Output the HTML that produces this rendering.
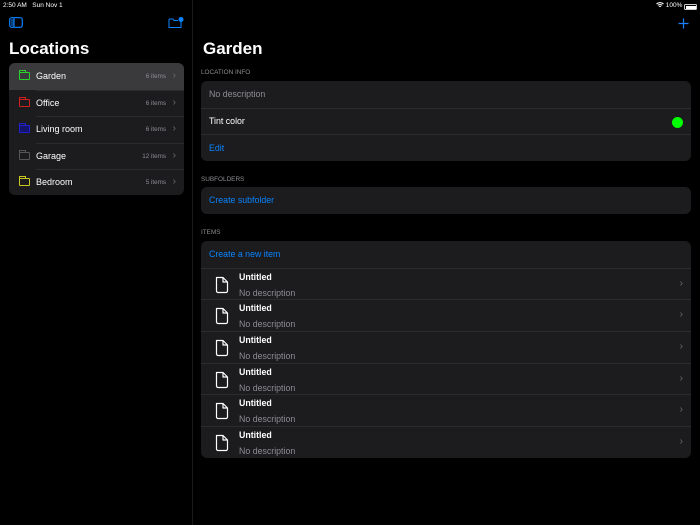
<!DOCTYPE html>
<html><head><meta charset="utf-8"><style>
*{margin:0;padding:0;box-sizing:border-box}
body{width:700px;height:525px;background:#000;font-family:"Liberation Sans",sans-serif;color:#fff;position:relative;overflow:hidden}
.abs{position:absolute}
.status{font-size:6.5px;color:#fff;top:2px}
.sidebar{left:0;top:0;width:193px;height:525px;border-right:1px solid #1a1a1a}
.list{left:9px;top:63px;width:175px;height:132px;background:#1c1c1e;border-radius:6px;overflow:hidden}
.row{height:26.5px;position:relative;font-size:9px}
.row .f{position:absolute;left:10px;top:9px;width:11px;height:8px;border:1px solid;border-radius:1px}
.row .f:before{content:"";position:absolute;left:-1px;top:-3px;width:5px;height:2px;border:1px solid;border-bottom:none;border-color:inherit}
.row .n{position:absolute;left:27px;top:8px}
.row .c{position:absolute;right:18px;top:10px;font-size:6.3px;color:#8d8d93}
.row .ch{position:absolute;right:8px;top:7px;color:#6d6d72;font-size:10px}
.row+.row:after{content:"";position:absolute;left:27px;right:0;top:0;border-top:1px solid #2c2c2e}
.sel{background:#3a3a3c}
.h1{font-weight:bold;font-size:17px}
.sec{font-size:6.4px;color:#8d8d93;left:201px}
.card{left:201px;width:490px;background:#1c1c1e;border-radius:6px;overflow:hidden}
.cr{height:26.5px;position:relative;display:flex;align-items:center;padding-left:8px;font-size:8.8px}
.cr+.cr{border-top:1px solid #2c2c2e}
.blue{color:#0a84ff}
.it{height:31.7px;position:relative;border-top:1px solid #2c2c2e}
.it .t{position:absolute;left:38px;top:3px;font-size:8.8px;font-weight:bold}
.it .d{position:absolute;left:38px;top:19px;font-size:8.8px;color:#8d8d93}
.it svg{position:absolute;left:13px;top:7px}
.it .ch{position:absolute;right:8px;top:9px;color:#6d6d72;font-size:10px}
</style></head><body>
<div class="abs status" style="left:3px">2:50 AM&nbsp;&nbsp;&nbsp;Sun Nov 1</div>
<div class="abs status" style="left:656px;top:2px">
<svg width="8" height="6" viewBox="0 0 8 6" style="vertical-align:-1px"><path d="M0.5 2 A5 5 0 0 1 7.5 2 M1.8 3.4 A3.2 3.2 0 0 1 6.2 3.4 M3 4.7 A1.5 1.5 0 0 1 5 4.7" stroke="#fff" fill="none" stroke-width="1"/></svg> 100%</div>
<div class="abs" style="left:684px;top:4px;width:13px;height:6px;border:1px solid #ccc;border-radius:1.5px;padding:0.5px"><div style="background:#fff;width:100%;height:100%"></div></div>
<div class="abs sidebar"></div>
<svg class="abs" style="left:9px;top:17px" width="14" height="11" viewBox="0 0 14 11"><rect x="0.7" y="0.7" width="12.6" height="9.6" rx="2" fill="none" stroke="#0a84ff" stroke-width="1.2"/><line x1="5" y1="1" x2="5" y2="10" stroke="#0a84ff" stroke-width="1.2"/><rect x="2" y="2" width="2.4" height="7" fill="#0a84ff" opacity=".5"/></svg>
<svg class="abs" style="left:168px;top:16px" width="16" height="13" viewBox="0 0 16 13"><path d="M1 3V11.5H13V5.5" fill="none" stroke="#0a84ff" stroke-width="1"/><path d="M1 3H5l1 1.5h4" fill="none" stroke="#0a84ff" stroke-width="1"/><circle cx="13" cy="3.5" r="2.5" fill="#0a84ff"/></svg>
<div class="abs h1" style="left:9px;top:39px">Locations</div>
<div class="abs list">
<div class="row sel"><span class="f" style="border-color:#2ad22a"></span><span class="n">Garden</span><span class="c">6 items</span><span class="ch">›</span></div>
<div class="row"><span class="f" style="border-color:#d02020"></span><span class="n">Office</span><span class="c">6 items</span><span class="ch">›</span></div>
<div class="row"><span class="f" style="border-color:#2020d0;background:#14146a"></span><span class="n">Living room</span><span class="c">6 items</span><span class="ch">›</span></div>
<div class="row"><span class="f" style="border-color:#555"></span><span class="n">Garage</span><span class="c">12 items</span><span class="ch">›</span></div>
<div class="row"><span class="f" style="border-color:#c8c820"></span><span class="n">Bedroom</span><span class="c">5 items</span><span class="ch">›</span></div>
</div>
<svg class="abs" style="left:678px;top:18px" width="11" height="11" viewBox="0 0 11 11"><path d="M5.5 0.5V10.5M0.5 5.5H10.5" stroke="#1a7fff" stroke-width="1.2"/></svg>
<div class="abs h1" style="left:203px;top:39px">Garden</div>
<div class="abs sec" style="top:69px">LOCATION INFO</div>
<div class="abs card" style="top:81px">
<div class="cr" style="color:#8d8d93">No description</div>
<div class="cr">Tint color<span style="position:absolute;right:8px;top:8px;width:11px;height:11px;border-radius:50%;background:#00ff00"></span></div>
<div class="cr blue">Edit</div>
</div>
<div class="abs sec" style="top:176px">SUBFOLDERS</div>
<div class="abs card" style="top:187px"><div class="cr blue">Create subfolder</div></div>
<div class="abs sec" style="top:229px">ITEMS</div>
<div class="abs card" style="top:241px">
<div class="cr blue">Create a new item</div>
<div id="items"></div>
</div>
<script>
var h='';for(var i=0;i<6;i++)h+='<div class="it"><svg width="16" height="18" viewBox="0 0 16 18"><path d="M2.5 1.5H9L13.5 6V15a1.5 1.5 0 0 1-1.5 1.5H4A1.5 1.5 0 0 1 2.5 15z M9 1.5V6H13.5" fill="none" stroke="#fff" stroke-width="1.2" stroke-linejoin="round"/></svg><span class="t">Untitled</span><span class="d">No description</span><span class="ch">›</span></div>';
document.getElementById('items').innerHTML=h;
</script>
</body></html>
